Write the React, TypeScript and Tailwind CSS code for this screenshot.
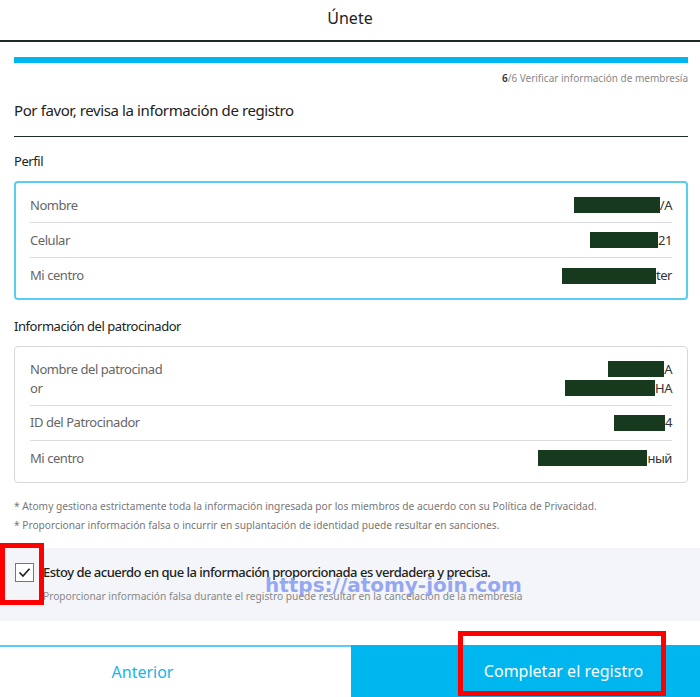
import React from 'react';

const Redact: React.FC<{ w: number; tail: string }> = ({ w, tail }) => (
  <span className="flex items-center">
    <span className="inline-block h-[16px] bg-[#173a1e]" style={{ width: w }} />
    <span>{tail}</span>
  </span>
);

const Row: React.FC<{ label: React.ReactNode; value: React.ReactNode; tall?: boolean; last?: boolean }> = ({
  label,
  value,
  tall,
  last,
}) => (
  <div
    className={`flex justify-between items-center ${tall ? 'h-[53px]' : 'h-[35px]'} ${
      last ? '' : 'border-b border-[#d9dce1]'
    }`}
  >
    <div className="text-[13px] leading-[19px] tracking-[-0.45px] text-[#666]">{label}</div>
    <div className="text-[13px] leading-[19px] tracking-[-0.45px] text-[#333] flex flex-col items-end">{value}</div>
  </div>
);

export default function App() {
  return (
    <div className="relative w-[700px] h-[697px] bg-white overflow-hidden font-['Noto_Sans','Open_Sans',sans-serif]">
      {/* header */}
      <div className="h-[42px] flex items-center justify-center pb-[4px] border-b-2 border-[#1f2a22] text-[16px] text-[#222]">
        Únete
      </div>

      <div className="pl-[14px] pr-[12px]">
        <div className="mt-[15px] h-[6px] bg-[#00b6ee]" />
        <div className="mt-[8px] text-right text-[10px] text-[#888]">
          <span className="text-[#333] font-semibold">6</span>/6 Verificar información de membresía
        </div>
        <div className="mt-[13px] text-[15px] tracking-[-0.4px] text-[#222] pb-[14px] border-b border-[#1f2a22]">
          Por favor, revisa la información de registro
        </div>

        <div className="mt-[15px] text-[13px] tracking-[-0.45px] text-[#222]">Perfil</div>
        <div className="mt-[10px] border-2 border-[#5bcdf5] rounded-[4px] px-[14px] py-[5px]">
          <Row label="Nombre" value={<Redact w={86} tail="/A" />} />
          <Row label="Celular" value={<Redact w={68} tail="21" />} />
          <Row label="Mi centro" value={<Redact w={94} tail="ter" />} last />
        </div>

        <div className="mt-[17px] text-[13px] tracking-[-0.45px] text-[#222]">Información del patrocinador</div>
        <div className="mt-[9px] border border-[#d6d8dc] rounded-[4px] px-[15px] py-[6px]">
          <Row
            tall
            label={
              <>
                Nombre del patrocinad
                <br />
                or
              </>
            }
            value={
              <>
                <Redact w={56} tail="A" />
                <Redact w={90} tail="HA" />
              </>
            }
          />
          <Row label="ID del Patrocinador" value={<Redact w={51} tail="4" />} />
          <Row label="Mi centro" value={<Redact w={109} tail="ный" />} last />
        </div>

        <div className="mt-[14px] text-[10.2px] leading-[19px] text-[#777]">
          <p>* Atomy gestiona estrictamente toda la información ingresada por los miembros de acuerdo con su Política de Privacidad.</p>
          <p>* Proporcionar información falsa o incurrir en suplantación de identidad puede resultar en sanciones.</p>
        </div>
      </div>

      {/* agreement */}
      <div className="mt-[13px] h-[73px] bg-[#f3f5f8] flex items-start pl-[15px] pt-[14px]">
        <div className="w-[19px] h-[19px] mt-[1px] border border-[#777] bg-white flex items-center justify-center">
          <svg width="13" height="11" viewBox="0 0 13 11">
            <path d="M1.5 5.5 L5 9 L11.5 1.8" fill="none" stroke="#222" strokeWidth="1.7" />
          </svg>
        </div>
        <div className="ml-[9px]">
          <div className="text-[13px] font-medium tracking-[-0.5px] text-[#222] leading-[20px]">
            Estoy de acuerdo en que la información proporcionada es verdadera y precisa.
          </div>
          <div className="mt-[7px] text-[10.2px] text-[#888]">
            Proporcionar información falsa durante el registro puede resultar en la cancelación de la membresía
          </div>
        </div>
      </div>

      {/* bottom buttons */}
      <div className="absolute left-0 right-0 bottom-0 h-[52px] flex">
        <button className="w-[351px] border-t-2 border-[#5bcdf5] bg-white text-[16px] text-[#18b4ea] pr-[66px]">
          Anterior
        </button>
        <button className="flex-1 bg-[#00b6ee] text-white text-[16px] pl-[76px]">Completar el registro</button>
      </div>

      {/* annotations */}
      <div className="absolute left-0 top-[543px] w-[44px] h-[62px] border-[5px] border-[#ff0000]" />
      <div className="absolute left-[458px] top-[631px] w-[208px] h-[65px] border-[5px] border-[#ff0000]" />
      <div className="absolute left-[265px] top-[572px] text-[20px] leading-[26px] font-bold text-[#869af2] opacity-85 font-['DejaVu_Sans',sans-serif] pointer-events-none">
        https://atomy-join.com
      </div>
    </div>
  );
}
